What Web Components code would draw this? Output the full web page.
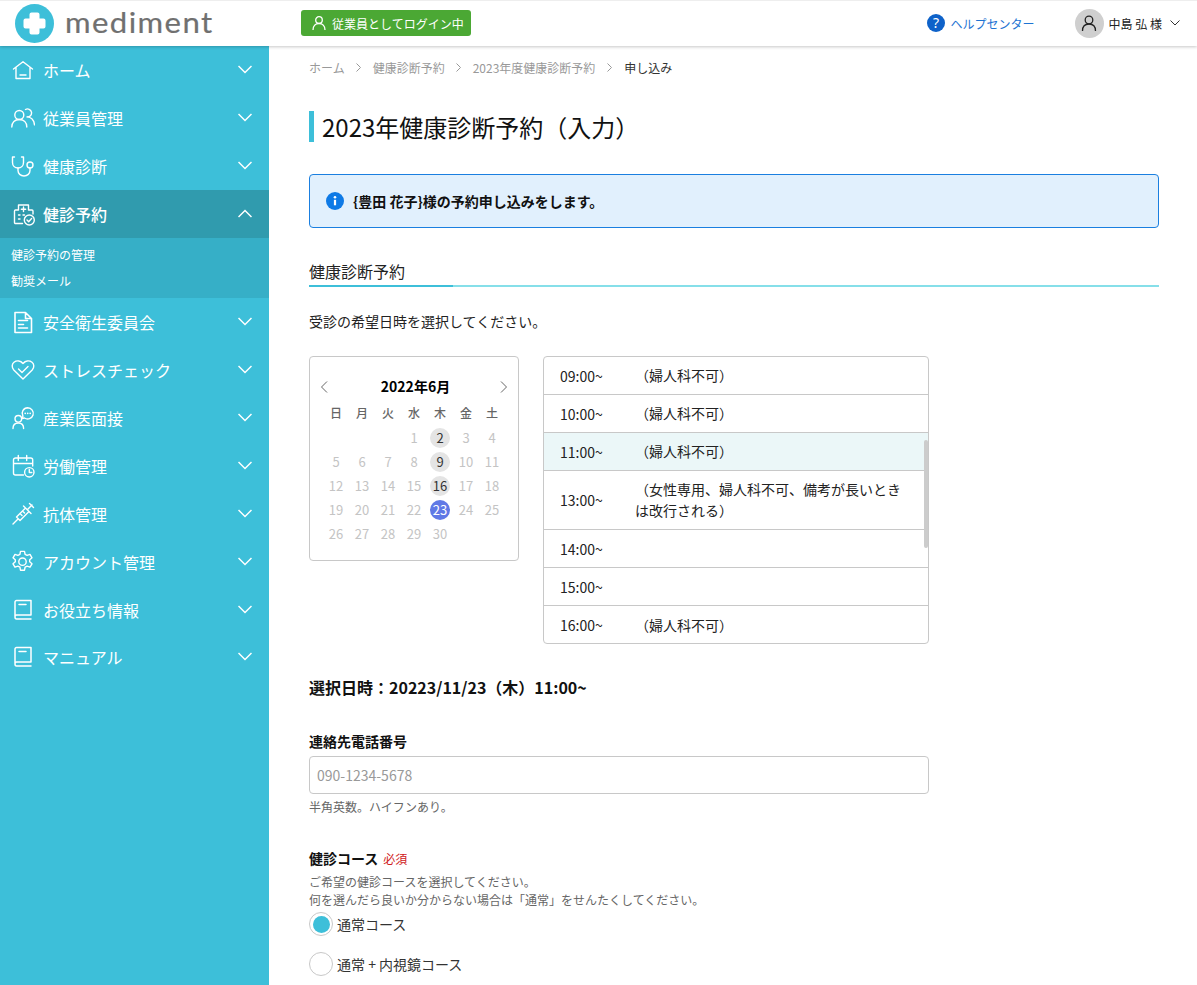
<!DOCTYPE html>
<html lang="ja"><head><meta charset="utf-8"><style>
html,body{margin:0;padding:0;height:985px;overflow:hidden;background:#fff}
body{font-family:"Noto Sans CJK JP","Noto Sans",sans-serif;color:#000}
app-shell{display:block;height:985px}
</style></head><body>
<app-shell></app-shell>
<script>
const I={
home:'<path d="M2.500 11 12 3.700l9.500 7.300M5 9.500v11h14v-11M9 17h6"/>',
users:'<circle cx="8.300" cy="9" r="4.500"/><path d="M.8 21c0-4.500 3-7.500 7.500-7.500s7.500 3 7.500 7.500"/><path d="M14.500 3.500a4 4 0 1 1 1.500 7.400c4.200.3 7 3.500 7.500 8"/>',
steth:'<path d="M3.500 3H1.500v5.500c0 3.300 2.500 5.500 5.500 5.500s5.500-2.200 5.500-5.500V3h-2"/><path d="M7 14v2.500c0 3 2.500 5.500 6 5.500s6-2.500 6-5.500V14"/><circle cx="19" cy="11" r="3"/>',
hosp:'<path d="M7.500 8V3h10v5H21a1 1 0 0 1 1 1v3M11.500 21.500H4.500a1 1 0 0 1-1-1V9a1 1 0 0 1 1-1h3M12.500 5v4.500M10.300 7.200h4.400M7.500 13h1.500M12 13h1.500M7.500 17h1.500"/><circle cx="18.300" cy="18" r="5"/><path d="m16 18 1.700 1.700 2.900-3.100"/>',
doc:'<path d="M4 2.500h10.500l6 6V22.500H4zM14.500 2.500v6h6M7.500 10.500h9M7.500 14.500h5M7.500 18h9" stroke-width="1.600"/>',
heart:'<path d="M12 21 2.800 12C.5 9.500.8 6 3 4.200c2.700-2 6.500-1.700 9 1.300 2.500-3 6.300-3.300 9-1.300 2.200 1.800 2.500 5.300.2 7.800z"/><path d="m7.500 11 3.500 3.500 6-6"/>',
talk:'<circle cx="7.300" cy="12.800" r="3.300"/><path d="M2 22.500c0-3.500 2-5.500 5.300-5.500s5.300 2 5.300 5.500"/><path d="M16.700 1.800a5.600 5.600 0 1 1-3.200 10.200l-2.200.5.600-2.300a5.600 5.600 0 0 1 4.800-8.400z"/><path d="M14.200 7.300h.01M16.700 7.300h.01M19.200 7.300h.01" stroke-width="1.700"/>',
cal:'<path d="M12.500 21H4.500a2 2 0 0 1-2-2V6a2 2 0 0 1 2-2h15.200a2 2 0 0 1 2 2v6M2.500 9.500h19.200M7.300 1.500v5M15.700 1.500v5"/><circle cx="18.300" cy="18.300" r="4.700"/><path d="M18.300 15.500v3h2.500"/>',
syr:'<path d="m2 22 5-5M5.500 15 14.500 6 18 9.500 9 18.500zM12.500 4l7.500 7.500M17 7l4-4M18.500 1.500l4 4M9 11.500l2 2M11.500 9l2 2"/>',
gear:'<g transform="translate(.5 .7)"><circle cx="11" cy="11" r="3.700"/><path d="M9 .7h4l.6 3 2 1 2.900-1 2 3.400-2.300 2v2l2.300 2-2 3.400-2.900-1-2 1-.6 3H9l-.6-3-2-1-2.900 1-2-3.400 2.300-2v-2l-2.300-2 2-3.400 2.900 1 2-1z"/></g>',
book:'<path d="M4 18.500V4a1.500 1.500 0 0 1 1.500-1.500H20V17H5.500A1.800 1.800 0 0 0 4 19c0 1.300.7 2 1.500 2H20M8 6.500h7" stroke-width="1.500"/>'
};
const svg=(k,w=24)=>`<svg width="${w}" height="${w}" viewBox="0 0 24 24" fill="none" stroke="currentColor" stroke-width="1.400" stroke-linecap="round" stroke-linejoin="round">${I[k]}</svg>`;
function def(name,html,init){customElements.define(name,class extends HTMLElement{constructor(){super();const r=this.attachShadow({mode:'open'});r.innerHTML=html;}connectedCallback(){if(init&&!this._i){this._i=1;init(this)}}})}
const crumb='<svg width="5" height="9" viewBox="0 0 5 9" fill="none" stroke="#999"><path d="m.5.500 4 4-4 4"/></svg>';

def('nav-item',`<style>
:host{display:block;color:#fff}
.r{display:flex;align-items:center;height:48px;padding:0 17px 0 11px;font-size:16px}
:host([active]) .r{background:#309bae;font-weight:500}
.i{width:24px;height:24px;margin-right:8px;display:flex}
.t{flex:1}
.c{display:flex;position:relative;top:-1px}
</style><div class="r"><span class="i"></span><span class="t"><slot></slot></span><svg class="c" width="14" height="9" viewBox="0 0 14 9" fill="none" stroke="currentColor" stroke-width="1.500"><path d="m.5 1 6.500 6.500L13.500 1"/></svg></div>`,e=>{
e.shadowRoot.querySelector('.i').innerHTML=svg(e.getAttribute('icon'));
if(e.hasAttribute('active'))e.shadowRoot.querySelector('.c').innerHTML='<path d="M.5 8 7 1.500 13.500 8"/>';
});
def('nav-sub',`<style>
:host{display:block;background:#36afc7;color:#fff;font-size:12px;height:60px;padding:4px 0 0 11px;box-sizing:border-box}
div{line-height:26px}
</style><div>健診予約の管理</div><div>勧奨メール</div>`);
def('side-nav',`<style>:host{display:block;width:269px;background:#3dbfd9;flex:none;height:939px}</style><slot></slot>`);
def('top-bar',`<style>
:host{display:flex;align-items:center;height:46px;background:#fff;box-shadow:inset 0 1px 0 #eee,0 1px 3px rgba(0,0,0,.22);position:relative;z-index:2;font-size:12px}
.logo{display:flex;align-items:center;width:301px;padding-left:15px;box-sizing:border-box}
.word{display:inline-block;font-family:Lato,"Noto Sans",sans-serif;font-size:28px;color:#707070;margin-left:11px;letter-spacing:1.300px;line-height:1;position:relative;top:-1px;transform:scaleX(1.11);transform-origin:left center;-webkit-text-stroke:.2px #707070}
.badge{display:flex;align-items:center;background:#4ba834;color:#fff;height:26px;border-radius:3px;width:170px;padding-left:10px;box-sizing:border-box;gap:5px;font-size:12px}
.sp{flex:1}
.help{display:flex;align-items:center;gap:6px;color:#1e73d2;font-size:12px;margin-right:40px}
.user{display:flex;align-items:center;font-size:12px;color:#222;margin-right:17px}
.av{width:29px;height:29px;border-radius:50%;background:#cfcfcf;display:flex;align-items:center;justify-content:center;margin-right:5px}
.ch{margin-left:8px}
</style>
<div class="logo"><svg width="39" height="39" viewBox="0 0 39 39"><circle cx="19.500" cy="19.500" r="19.500" fill="#3dbfd9"/><path d="M16.500 8.500h6a2 2 0 0 1 2 2V14.500h4a2 2 0 0 1 2 2v6a2 2 0 0 1-2 2h-4v4a2 2 0 0 1-2 2h-6a2 2 0 0 1-2-2v-4h-4a2 2 0 0 1-2-2v-6a2 2 0 0 1 2-2h4v-4a2 2 0 0 1 2-2z" fill="#fff"/></svg><span class="word">mediment</span></div>
<div class="badge"><svg width="16" height="16" viewBox="0 0 16 16" fill="none" stroke="#fff" stroke-width="1.300"><circle cx="8" cy="5" r="3.300"/><path d="M2 15c0-4 2.500-6.500 6-6.500s6 2.500 6 6.500"/></svg>従業員としてログイン中</div>
<div class="sp"></div>
<div class="help"><svg width="18" height="18" viewBox="0 0 18 18"><circle cx="9" cy="9" r="9" fill="#0e62c9"/><text x="9" y="13.800" text-anchor="middle" font-size="14" fill="#fff" font-family="Noto Sans">?</text></svg>ヘルプセンター</div>
<div class="user"><span class="av"><svg width="16" height="17" viewBox="0 0 16 17" fill="none" stroke="#222" stroke-width="1.300"><circle cx="8" cy="5" r="3.800"/><path d="M1.500 16c0-4.500 2.500-7 6.500-7s6.500 2.500 6.500 7"/></svg></span>中島 弘 様<svg class="ch" width="10" height="6" viewBox="0 0 10 6" fill="none" stroke="#333" stroke-width="1"><path d="m.5.500 4.500 4.500L9.500.500"/></svg></div>`);
def('bread-crumb',`<style>
:host{display:flex;align-items:center;font-size:12px;color:#999;height:20px}
i{font-style:normal;width:28px;display:flex;justify-content:center}
i:last-of-type{width:29px}
b{font-weight:400;color:#333}
</style>ホーム<i>${crumb}</i>健康診断予約<i>${crumb}</i>2023年度健康診断予約<i>${crumb}</i><b>申し込み</b>`);
def('page-title',`<style>
:host{display:flex;align-items:center;height:31px;border-left:5px solid #3dbfd9;padding-left:8px;font-size:24px;color:#111;margin-top:34px}
</style><slot></slot>`);
def('info-box',`<style>
:host{display:flex;align-items:center;height:54px;box-sizing:border-box;background:#e1f0fd;border:1px solid #1a7fe0;border-radius:4px;padding-left:16px;gap:9px;font-size:14px;font-weight:700;margin-top:32px;color:#111}
</style><svg width="18" height="18" viewBox="0 0 18 18"><circle cx="9" cy="9" r="9" fill="#0e7ae6"/><circle cx="9" cy="5.300" r="1.300" fill="#fff"/><rect x="7.900" y="7.800" width="2.200" height="5.500" fill="#fff"/></svg><slot></slot>`);
def('section-head',`<style>
:host{display:block;margin-top:31px;height:26px;line-height:24px;font-size:16px;color:#222;position:relative;border-bottom:2px solid #86dfe9}
:host::after{content:"";position:absolute;left:0;bottom:-2px;width:144px;height:2px;background:#3dbfd9}
</style><slot></slot>`);
def('mini-cal',`<style>
:host{display:block;box-sizing:border-box;width:210px;height:205px;border:1px solid #c8c8c8;border-radius:4px;padding:17px 6px 0;flex:none}
.h{display:flex;align-items:center;justify-content:space-between;padding:0 4px;height:24px;font-size:14px;font-weight:700;color:#000}
.h span{margin-left:3px}
.h svg{margin-top:1px}
.g{display:grid;grid-template-columns:repeat(7,26px);grid-auto-rows:24px;justify-items:center;align-items:center;font-size:13px;margin:4px 0 0 7px}
.w{color:#666;font-weight:500;font-size:12px;margin-bottom:4px}
.d{color:#c4c4c4;width:20px;height:20px;line-height:20px;text-align:center;border-radius:50%}
.m{background:#e4e4e4;color:#333}
.s{background:#6079e6;color:#fff}
</style><div class="h"><svg width="8" height="12" viewBox="0 0 8 12" fill="none" stroke="#666"><path d="M7 .500 1.500 6 7 11.500"/></svg><span>2022年6月</span><svg width="8" height="12" viewBox="0 0 8 12" fill="none" stroke="#666"><path d="M1 .500 6.500 6 1 11.500"/></svg></div><div class="g"></div>`,e=>{
let h='日月火水木金土'.split('').map(x=>`<span class="w">${x}</span>`).join('');
h+='<span></span>'.repeat(3);
for(let i=1;i<=30;i++){h+=`<span class="d ${i==23?'s':(i==2||i==9||i==16?'m':'')}">${i}</span>`}
e.shadowRoot.querySelector('.g').innerHTML=h;
});
def('time-list',`<style>
:host{display:block;box-sizing:border-box;width:386px;height:288px;border:1px solid #c8c8c8;border-radius:4px;overflow:hidden;position:relative;flex:none}
:host::after{content:"";position:absolute;right:0;top:83px;width:4px;height:108px;background:#ccc;border-radius:2px}
</style><slot></slot>`);
def('time-row',`<style>
:host{display:flex;align-items:center;box-sizing:border-box;min-height:38px;border-bottom:1px solid #c8c8c8;font-size:14px;color:#222;padding-left:16px}
:host(:last-child){border-bottom:0}
:host([sel]){background:#ebf7f8}
.t{width:75px;flex:none}
.n{width:270px;line-height:21px;padding:8px 0}
</style><span class="t"></span><span class="n"><slot></slot></span>`,e=>{e.shadowRoot.querySelector('.t').textContent=e.getAttribute('t')});
def('field-label',`<style>:host{display:block;font-size:14px;font-weight:700;color:#111}</style><slot></slot>`);
def('req-mark',`<style>:host{display:inline-block;font-size:12px;font-weight:400;color:#d0201a;margin-left:5px}</style><slot></slot>`);
def('text-input',`<style>:host{display:block;box-sizing:border-box;width:620px;height:38px;border:1px solid #c8c8c8;border-radius:4px;padding-left:7px;font-size:14px;line-height:36px;color:#999}</style><slot></slot>`);
def('radio-opt',`<style>
:host{display:flex;align-items:center;gap:4px;font-size:14px;color:#333;height:24px}
.o{width:22px;height:22px;border:1px solid #c8c8c8;border-radius:50%;display:flex;align-items:center;justify-content:center;background:#fff}
:host([on]) .o::after{content:"";width:17px;height:17px;border-radius:50%;background:#3dbfd9}
</style><span class="o"></span><slot></slot>`);
def('app-shell',`<style>
:host{display:block}
.b{display:flex}
.m{flex:1;padding:11px 38px 0 40px;height:939px;overflow:hidden;box-sizing:border-box}
.p{margin:24px 0 0;font-size:14px;line-height:20px;color:#222}
.row{display:flex;gap:24px;margin-top:25px}
.sel{font-size:16px;font-weight:700;margin-top:32px;color:#111;line-height:22px}
.help{font-size:12px;color:#666;line-height:18px}
</style>
<top-bar></top-bar>
<div class="b"><side-nav>
<nav-item icon="home">ホーム</nav-item><nav-item icon="users">従業員管理</nav-item><nav-item icon="steth">健康診断</nav-item><nav-item icon="hosp" active>健診予約</nav-item><nav-sub></nav-sub><nav-item icon="doc">安全衛生委員会</nav-item><nav-item icon="heart">ストレスチェック</nav-item><nav-item icon="talk">産業医面接</nav-item><nav-item icon="cal">労働管理</nav-item><nav-item icon="syr">抗体管理</nav-item><nav-item icon="gear">アカウント管理</nav-item><nav-item icon="book">お役立ち情報</nav-item><nav-item icon="book" style="margin-top:-1px">マニュアル</nav-item>
</side-nav>
<main class="m">
<bread-crumb></bread-crumb>
<page-title>2023年健康診断予約（入力）</page-title>
<info-box>{豊田 花子}様の予約申し込みをします。</info-box>
<section-head>健康診断予約</section-head>
<p class="p">受診の希望日時を選択してください。</p>
<div class="row"><mini-cal></mini-cal><time-list>
<time-row t="09:00~">（婦人科不可）</time-row><time-row t="10:00~">（婦人科不可）</time-row><time-row t="11:00~" sel>（婦人科不可）</time-row><time-row t="13:00~">（女性専用、婦人科不可、備考が長いときは改行される）</time-row><time-row t="14:00~"></time-row><time-row t="15:00~"></time-row><time-row t="16:00~">（婦人科不可）</time-row>
</time-list></div>
<div class="sel">選択日時：20223/11/23（木）11:00~</div>
<field-label style="margin-top:33px;line-height:20px">連絡先電話番号</field-label>
<text-input style="margin-top:5px">090-1234-5678</text-input>
<div class="help" style="margin-top:4px">半角英数。ハイフンあり。</div>
<field-label style="margin-top:31px;line-height:22px">健診コース<req-mark>必須</req-mark></field-label>
<div class="help" style="margin-top:3px">ご希望の健診コースを選択してください。<br>何を選んだら良いか分からない場合は「通常」をせんたくしてください。</div>
<radio-opt on style="margin-top:3px">通常コース</radio-opt>
<radio-opt style="margin-top:16px">通常 + 内視鏡コース</radio-opt>
</main></div>`);
</script></body></html>
